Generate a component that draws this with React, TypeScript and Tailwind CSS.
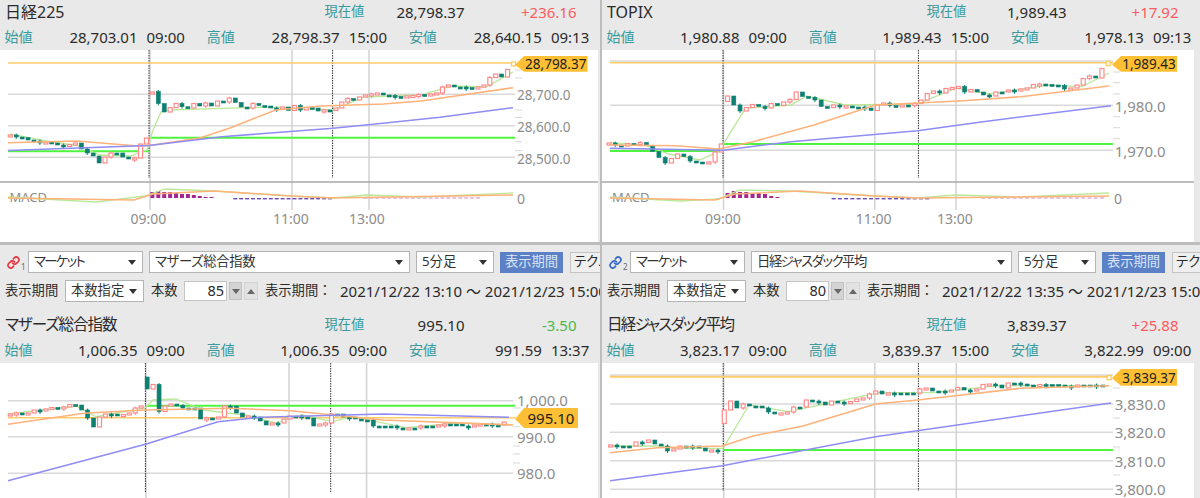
import { Link } from "lucide-react";

type Pt = [number, number];

type ChartData = {
  view: [number, number, number, number];
  x0: number;
  dx: number;
  closes: number[];
  opens: Record<number, number>;
  lastMark: boolean;
  gold: [number, number, number, number];
  grid: number[];
  gridEnd: number;
  ticks: number[];
  axisX: number;
  axisSize: number;
  axis: [string, number][];
  dotted: number[];
  dottedEnd: number;
  gray: [number, number][];
  green: [number, number, number][];
  blue: Pt[];
  orange: Pt[];
  light: Pt[];
  tag: { x1: number; x2: number; y1: number; y2: number; text: string; size: number };
  macd?: {
    green: Pt[];
    orange: Pt[];
    pos: [number, number[]];
    neg: [number, number];
    times: [string, number][];
    zeroX: number;
    labelX: number;
  };
};

const nikkei: ChartData = {
  view: [0, 50, 598, 192],
  x0: 10.3,
  dx: 5.92,
  closes: [
    135, 137, 137.5, 140, 141, 142.5, 142, 143, 145, 145, 144.5, 143, 149, 153, 156, 163, 157, 153, 153, 157, 159, 158,
    144, 138, 92, 103.5, 112, 107.6, 103.5, 106.7, 108, 103.5, 106, 103, 106, 101, 102, 98, 102.5, 107, 108, 103.5,
    105.5, 106, 108, 108.5, 107, 110.5, 105.5, 110, 107.5, 108, 111, 110, 110.5, 108, 102, 98.5, 100, 97, 95, 94, 93,
    95, 95.5, 96.5, 98, 96, 95.5, 94.5, 95, 94, 93, 87, 85, 87, 87, 87.5, 89, 87, 85, 77.5, 74, 77, 69.5,
  ],
  opens: { 24: 94, 25: 91.5 },
  lastMark: true,
  gold: [8, 515, 63, 1.5],
  grid: [94.3, 125.7, 157.3],
  gridEnd: 515,
  ticks: [70, 78, 110, 117.5, 141.7, 150.7],
  axisX: 517,
  axisSize: 13.5,
  axis: [
    ["28,700.0", 95],
    ["28,600.0", 126.5],
    ["28,500.0", 158.5],
  ],
  dotted: [149, 332.6],
  dottedEnd: 178,
  gray: [
    [150, 210],
    [292, 210],
    [369, 210],
  ],
  green: [
    [8, 149, 151.3],
    [150, 515, 137.7],
  ],
  blue: [[8, 150.6], [149, 145.6], [222, 136.7], [333, 128.3], [383, 123.3], [440, 117.3], [513, 107.7]],
  orange: [[8, 142.7], [76.5, 141], [138, 146], [153, 145], [200, 138], [230, 128], [275.5, 110], [321, 106], [383, 104], [421, 101], [513, 87.7]],
  light: [[10, 134], [46, 141], [80, 146], [99.5, 155], [130, 156], [147, 150], [153, 130], [161, 112], [168, 110], [268, 107], [333, 110], [364, 97], [421, 95], [452, 86], [486, 87], [513, 72]],
  tag: { x1: 515, x2: 587.5, y1: 56, y2: 71.7, text: "28,798.37", size: 13.5 },
  macd: {
    green: [[8, 197], [96, 202], [145, 196], [165, 189], [214, 191], [291, 196], [333, 198], [367, 195], [421, 197], [513, 193]],
    orange: [[8, 198], [134, 200], [153, 194], [214, 191], [291, 196], [333, 198], [513, 195]],
    pos: [24, [6, 7, 6, 6, 5, 4, 4, 3, 2, 1, 1]],
    neg: [38, 55],
    times: [["09:00", 148.5], ["11:00", 291], ["13:00", 367]],
    zeroX: 517,
    labelX: 9.5,
  },
};

const topix: ChartData = {
  view: [602, 50, 592, 192],
  x0: 609,
  dx: 6.24,
  closes: [
    143, 145, 146, 143.5, 143.5, 142.5, 145.5, 151.5, 157.5, 163, 158.5, 154, 156.5, 161, 162, 162.5, 162, 152, 144,
    96, 105, 111, 107.5, 104.5, 106.5, 108, 103.5, 105.5, 102, 99.5, 92, 96.5, 97.5, 100, 106.5, 107.5, 105, 106.5, 106,
    107, 107, 108, 110.5, 105, 103, 105.5, 105.5, 105, 105, 103.5, 100, 93.5, 91, 93, 88.5, 87.5, 86.5, 92, 89.5, 92,
    95, 96, 92, 92, 90, 90, 89, 88, 84.5, 84, 84.5, 85, 85.5, 89, 88, 85, 78.5, 76, 78, 68.5,
  ],
  opens: { 19: 101.5 },
  lastMark: true,
  gold: [610, 1113, 62.7, 1.5],
  grid: [61, 105.3, 150.3],
  gridEnd: 1113,
  ticks: [72, 82.7, 94, 116.7, 127.7, 138.7],
  axisX: 1114.7,
  axisSize: 15,
  axis: [
    ["1,980.0", 107],
    ["1,970.0", 152],
  ],
  dotted: [723, 918.4],
  dottedEnd: 178,
  gray: [
    [723.5, 210],
    [874.8, 210],
    [956, 210],
  ],
  green: [
    [610, 723, 151],
    [723, 1113, 144],
  ],
  blue: [[610, 148.3], [723, 150.3], [791, 141.7], [917.6, 130.7], [983, 121.7], [1111, 105.7]],
  orange: [[610, 145], [676.5, 145.7], [718.6, 149], [753, 141.7], [814, 125], [875.5, 105], [963.6, 100.7], [1021, 96.7], [1109, 86]],
  light: [[610, 142.3], [646, 145.7], [669, 154], [699.5, 160], [718.6, 151.7], [745.4, 108.3], [791, 105], [806.7, 96], [845, 105], [917.6, 104], [956, 88], [990, 94], [1047.8, 85], [1082, 86.7], [1109, 73]],
  tag: { x1: 1112, x2: 1177, y1: 56, y2: 71.7, text: "1,989.43", size: 13.5 },
  macd: {
    green: [[610, 197], [680, 201], [718, 199], [740, 190], [790, 191], [875, 196], [918, 198], [956, 195], [1021, 197], [1109, 193]],
    orange: [[610, 198], [715, 200], [735, 194], [800, 191], [875, 196], [918, 198], [1109, 196]],
    pos: [19, [5, 7, 6, 6, 5, 5, 4, 2, 1]],
    neg: [36, 52],
    times: [["09:00", 723], ["11:00", 873.6], ["13:00", 955]],
    zeroX: 1114,
    labelX: 612,
  },
};

const mothers: ChartData = {
  view: [0, 363, 598, 135],
  x0: 10.3,
  dx: 5.95,
  closes: [
    414, 413, 413.5, 413, 410, 410.5, 409, 407.5, 407.5, 407, 404.5, 405, 410, 418, 427, 417, 414, 414, 415, 414.5, 413,
    408, 406, 389, 384.5, 411.5, 406, 404, 405.5, 408, 408, 408, 419, 418, 418, 417, 406, 406, 413, 417, 416, 417, 421,
    425, 423, 423, 419, 416, 416, 417, 418, 426, 424, 423, 414, 414, 417, 417, 419, 420, 420, 426, 426, 426, 426, 428,
    429, 428, 428, 426, 426, 426, 425, 424, 424, 424, 426, 426, 425, 424, 424, 425, 425, 422,
  ],
  opens: { 23: 377 },
  lastMark: false,
  gold: [8, 515, 417.7, 1.5],
  grid: [400.7, 436.7, 473.3],
  gridEnd: 513,
  ticks: [408, 426.7, 446, 454, 463],
  axisX: 517,
  axisSize: 15,
  axis: [
    ["1,000.0", 401],
    ["990.0", 437.5],
    ["980.0", 474],
  ],
  dotted: [145.4, 330.7],
  dottedEnd: 492,
  gray: [
    [146, 498],
    [289, 498],
    [366.6, 498],
  ],
  green: [[147, 515, 405.7]],
  blue: [[8, 480.7], [145.4, 444.3], [218, 421.7], [260, 417.3], [383, 414], [509, 417.3]],
  orange: [[8, 424.3], [84, 413.3], [145, 410], [230, 408.3], [291, 410.7], [333, 415], [383, 420], [513, 425]],
  light: [[8, 414], [76.5, 406], [96, 416.7], [145, 408], [153, 400], [176, 399], [203, 410], [245, 415], [275.5, 423], [302, 415], [333, 421.7], [352, 416.7], [405.7, 427.7], [459, 423], [513, 425]],
  tag: { x1: 515, x2: 578, y1: 408, y2: 428, text: "995.10", size: 15 },
};

const jasdaq: ChartData = {
  view: [602, 363, 592, 135],
  x0: 610.7,
  dx: 6.31,
  closes: [
    445, 446, 446, 446, 442, 442.5, 440, 444, 446, 451, 449, 446, 446, 446, 448, 451, 450, 451, 410, 401, 408, 404, 406,
    406, 408, 412, 413.5, 413, 412, 407, 407, 400, 401, 402, 405, 401, 402, 402, 401.5, 399, 398, 394, 391, 394, 393,
    393, 393, 393, 393, 389, 388, 391, 391, 392, 390, 387.5, 390, 391, 389, 384.5, 384, 385, 388, 383, 383, 384, 385,
    385, 384.5, 384.5, 384.5, 385, 386, 386, 385, 385, 385, 385, 385,
  ],
  opens: { 18: 423.5 },
  lastMark: true,
  gold: [610, 1111, 376.7, 2],
  grid: [375, 404, 432.3, 460.7, 489.3],
  gridEnd: 1113,
  ticks: [388, 418, 447, 475],
  axisX: 1114.7,
  axisSize: 15,
  axis: [
    ["3,830.0", 405],
    ["3,820.0", 433],
    ["3,810.0", 462],
    ["3,800.0", 490],
  ],
  dotted: [723.2, 918.4],
  dottedEnd: 491,
  gray: [
    [723.7, 498],
    [874.8, 498],
    [956.3, 498],
  ],
  green: [[723, 1113, 450]],
  blue: [[610, 480.7], [722.5, 465.7], [875.5, 436.7], [1111, 403]],
  orange: [[610, 452.7], [657.4, 447.7], [722.5, 446], [753, 436], [803, 426], [875.5, 404], [917.6, 400], [1021, 388.3], [1109, 385.7]],
  light: [[610, 446], [661, 446], [676.5, 448.3], [723, 448.3], [749, 405], [787.5, 411.7], [829.6, 403], [879.4, 392.7], [933, 392.7], [998, 385.7], [1109, 385.7]],
  tag: { x1: 1112, x2: 1177, y1: 369, y2: 385.7, text: "3,839.37", size: 13.5 },
};

const pts = (p: Pt[]) => p.map((q) => q.join(",")).join(" ");

function Chart({ data }: { data: ChartData }) {
  const [vx, vy, vw, vh] = data.view;
  const m = data.macd;
  const xOf = (i: number) => data.x0 + i * data.dx;
  const lastX = xOf(data.closes.length);
  const lastY = data.tag.y1 + (data.tag.y2 - data.tag.y1) / 2 + 1;

  return (
    <div className="bg-white" style={{ width: vw, height: vh }}>
      <svg width={vw} height={vh} viewBox={`${vx} ${vy} ${vw} ${vh}`} className="block font-['Noto_Sans',sans-serif]">
        {data.grid.map((y) => (
          <line key={y} x1={vx + 8} x2={data.gridEnd} y1={y} y2={y} stroke="#d9d9d9" strokeWidth="1.5" />
        ))}
        {data.ticks.map((y) => (
          <line key={y} x1={data.gridEnd} x2={data.gridEnd + 7} y1={y} y2={y} stroke="#d9d9d9" />
        ))}
        {data.gray.map(([x, y2]) => (
          <line key={x} x1={x} x2={x} y1={vy} y2={y2} stroke="#d2d2d2" strokeWidth="1.5" />
        ))}
        {data.dotted.map((x) => (
          <line key={x} x1={x} x2={x} y1={vy} y2={data.dottedEnd} stroke="#333" strokeDasharray="1.5 1" />
        ))}
        {m && <line x1={vx} x2={vx + vw} y1={182} y2={182} stroke="#a8a8a8" strokeWidth="1.5" />}

        {data.axis.map(([label, y]) => (
          <text key={label} x={data.axisX} y={y + 5} fontSize={data.axisSize} fill="#8c8c8c">
            {label}
          </text>
        ))}

        <line x1={data.gold[0]} x2={data.gold[1]} y1={data.gold[2]} y2={data.gold[2]} stroke="#ffcb6b" strokeWidth={data.gold[3]} />
        {data.green.map(([x1, x2, y]) => (
          <line key={y} x1={x1} x2={x2} y1={y} y2={y} stroke="#4ff53c" strokeWidth="2" />
        ))}
        <polyline points={pts(data.light)} fill="none" stroke="#bce89a" strokeWidth="1.3" />

        {data.closes.map((c, i) => {
          const open = data.opens[i] ?? (i > 0 ? data.closes[i - 1] : c + 2);
          const up = c < open;
          const top = Math.min(open, c);
          const h = Math.max(Math.abs(open - c), 2);
          const x = xOf(i);
          const color = up ? "#ff8a8a" : "#0e8072";
          return (
            <g key={i}>
              {i % 4 === 1 && <line x1={x} x2={x} y1={top - 1.5} y2={top + h + 2} stroke={color} />}
              <rect
                x={x - 2}
                y={top}
                width={4}
                height={h}
                fill={up ? "#fff" : "#0e8072"}
                stroke={color}
                strokeWidth={up ? 1.2 : 0.6}
              />
            </g>
          );
        })}
        {data.lastMark && (
          <rect x={lastX - 2} y={data.gold[2] - 1} width={4} height={4} fill="#fff" stroke="#ffc94d" strokeWidth="1.2" />
        )}

        <polyline points={pts(data.orange)} fill="none" stroke="#ffb27a" strokeWidth="1.6" />
        <polyline points={pts(data.blue)} fill="none" stroke="#8f8cf5" strokeWidth="1.5" />

        <polygon
          points={`${data.tag.x1},${lastY} ${data.tag.x1 + 9},${data.tag.y1} ${data.tag.x2},${data.tag.y1} ${data.tag.x2},${data.tag.y2} ${data.tag.x1 + 9},${data.tag.y2}`}
          fill="#fdbf33"
        />
        <text
          x={(data.tag.x1 + 9 + data.tag.x2) / 2}
          y={lastY + 4.5}
          fontSize={data.tag.size}
          textAnchor="middle"
          fill="#222"
        >
          {data.tag.text}
        </text>

        {m && (
          <g>
            <text x={m.labelX} y={202} fontSize="13" fill="#8c8c8c">
              MACD
            </text>
            {m.pos[1].map((h, i) => (
              <rect key={i} x={xOf(m.pos[0] + i) - 2} y={198 - h} width={4} height={h} fill="#a2278f" />
            ))}
            {Array.from({ length: m.neg[1] - m.neg[0] }, (_, i) => (
              <rect key={i} x={xOf(m.neg[0] + i) - 2} y={198} width={4} height={1.4} fill="#6a4ab8" />
            ))}
            {Array.from({ length: 20 }, (_, i) => (
              <rect key={i} x={xOf(60 + i) - 2} y={197.5} width={4} height={1} fill="#d38ac6" />
            ))}
            <polyline points={pts(m.green)} fill="none" stroke="#bce89a" strokeWidth="1.3" />
            <polyline points={pts(m.orange)} fill="none" stroke="#ffb27a" strokeWidth="1.5" />
            <text x={m.zeroX} y={204} fontSize="14" fill="#8c8c8c">
              0
            </text>
            {m.times.map(([t, x]) => (
              <text key={t} x={x} y={224} fontSize="14" textAnchor="middle" fill="#8c8c8c">
                {t}
              </text>
            ))}
          </g>
        )}
      </svg>
    </div>
  );
}

type Quote = {
  name: string;
  nameClass: string;
  now: string;
  change: string;
  changeColor: string;
  open: [string, string];
  high: [string, string];
  low: [string, string];
};

function Stat({ label, value }: { label: string; value: [string, string] }) {
  return (
    <div className="flex w-[202.2px] shrink-0 items-center">
      <span className="w-[28px] shrink-0 text-[14px] text-[#3b9a9c]">{label}</span>
      <span className="w-[105px] shrink-0 text-right">{value[0]}</span>
      <span className="ml-[9px]">{value[1]}</span>
    </div>
  );
}

function Header({ quote }: { quote: Quote }) {
  return (
    <div className="text-[15px] leading-none text-[#2b2b2b]">
      <div className="flex h-[24px] items-center pl-[5px]">
        <span className={`w-[319.5px] shrink-0 [font-feature-settings:'palt'] ${quote.nameClass}`}>{quote.name}</span>
        <span className="w-[40px] shrink-0 text-[13.3px] text-[#3b9a9c]">現在値</span>
        <span className="w-[100px] shrink-0 text-right">{quote.now}</span>
        <span className="w-[112px] shrink-0 text-right" style={{ color: quote.changeColor }}>
          {quote.change}
        </span>
      </div>
      <div className="flex h-[26px] items-center pl-[4.5px] whitespace-nowrap">
        <Stat label="始値" value={quote.open} />
        <Stat label="高値" value={quote.high} />
        <Stat label="安値" value={quote.low} />
      </div>
    </div>
  );
}

function Caret({ up }: { up?: boolean }) {
  return (
    <svg width="8" height="5" viewBox="0 0 8 5" className="shrink-0">
      <polygon points={up ? "4,0 8,5 0,5" : "0,0 8,0 4,5"} fill="currentColor" />
    </svg>
  );
}

function Select({ text, width, textClass = "" }: { text: string; width: string; textClass?: string }) {
  return (
    <div className={`flex h-[22px] shrink-0 items-center justify-between border border-[#b4b4b4] bg-white pr-[6px] pl-[5px] text-[13.3px] text-[#333] ${width}`}>
      <span className={`[font-feature-settings:'palt'] ${textClass}`}>{text}</span>
      <Caret />
    </div>
  );
}

type Bar = { color: string; num: string; market: string; marketClass: string; count: string; range: string };

function Toolbar({ color, num, market, marketClass, count, range }: Bar) {
  return (
    <div className="px-[7px] pt-[6px] pb-[11px] text-[13.3px] whitespace-nowrap text-[#2b2b2b]">
      <div className="flex h-[22px] items-center">
        <Link size={13} strokeWidth={3} color={color} className="shrink-0" />
        <span className="mt-[10px] ml-[1px] w-[7px] shrink-0 text-[8px] text-[#666]">{num}</span>
        <Select text="マーケット" width="w-[115px]" textClass="tracking-[-1.6px]" />
        <div className="ml-[6px] shrink-0">
          <Select text={market} width="w-[261px]" textClass={marketClass} />
        </div>
        <div className="ml-[6px] shrink-0">
          <Select text="5分足" width="w-[78px]" />
        </div>
        <div className="ml-[6px] flex h-[21px] w-[63px] shrink-0 items-center justify-center bg-[#5b80c6] text-[#dbe7f7]">表示期間</div>
        <div className="ml-[7px] flex h-[21px] w-[60px] shrink-0 items-center border border-[#c4c4c4] bg-[#efefef] pl-[3px] [font-feature-settings:'palt']">テクニカル</div>
      </div>
      <div className="mt-[7px] -ml-[2px] flex h-[22px] items-center">
        <span className="w-[60px] shrink-0">表示期間</span>
        <Select text="本数指定" width="w-[79px]" />
        <span className="ml-[7px] w-[33px] shrink-0">本数</span>
        <div className="flex h-[20px] w-[43px] shrink-0 items-center justify-end border border-[#c4c4c4] bg-white pr-[2px] text-[14.5px]">{count}</div>
        <div className="ml-[2px] flex h-[18px] w-[13px] shrink-0 items-center justify-center border border-[#c0c0c0] bg-[#d4d4d4] text-[#666]">
          <Caret />
        </div>
        <div className="ml-[2px] flex h-[18px] w-[14px] shrink-0 items-center justify-center border border-[#d4d4d4] bg-[#e2e2e2] text-[#666]">
          <Caret up />
        </div>
        <span className="ml-[7px] w-[75px] shrink-0">表示期間：</span>
        <span className="shrink-0 text-[15px]">{range}</span>
      </div>
    </div>
  );
}

function Column({ top, bottom, topQuote, bottomQuote, bar, className }: { top: ChartData; bottom: ChartData; topQuote: Quote; bottomQuote: Quote; bar: Bar; className: string }) {
  return (
    <div className={`h-full overflow-hidden ${className}`}>
      <Header quote={topQuote} />
      <Chart data={top} />
      <div className="h-[3px] bg-[#bdbdbd]" />
      <Toolbar {...bar} />
      <Header quote={bottomQuote} />
      <Chart data={bottom} />
    </div>
  );
}

export default function App() {
  return (
    <div className="flex h-[498px] w-[1200px] overflow-hidden bg-[#e9e9e9] font-['Noto_Sans','Noto_Sans_CJK_JP',sans-serif]">
      <Column
        className="w-[600px]"
        top={nikkei}
        bottom={mothers}
        topQuote={{ name: "日経225", nameClass: "text-[16px]", now: "28,798.37", change: "+236.16", changeColor: "#ff5a5f", open: ["28,703.01", "09:00"], high: ["28,798.37", "15:00"], low: ["28,640.15", "09:13"] }}
        bottomQuote={{ name: "マザーズ総合指数", nameClass: "text-[15.5px] tracking-[-1px]", now: "995.10", change: "-3.50", changeColor: "#4cb848", open: ["1,006.35", "09:00"], high: ["1,006.35", "09:00"], low: ["991.59", "13:37"] }}
        bar={{ color: "#e5343c", num: "1", market: "マザーズ総合指数", marketClass: "tracking-[-0.3px]", count: "85", range: "2021/12/22 13:10 ～ 2021/12/23 15:00" }}
      />
      <Column
        className="w-[600px] border-l-2 border-[#bdbdbd]"
        top={topix}
        bottom={jasdaq}
        topQuote={{ name: "TOPIX", nameClass: "text-[16px]", now: "1,989.43", change: "+17.92", changeColor: "#ff5a5f", open: ["1,980.88", "09:00"], high: ["1,989.43", "15:00"], low: ["1,978.13", "09:13"] }}
        bottomQuote={{ name: "日経ジャスダック平均", nameClass: "text-[15.5px] tracking-[-1.7px]", now: "3,839.37", change: "+25.88", changeColor: "#ff5a5f", open: ["3,823.17", "09:00"], high: ["3,839.37", "15:00"], low: ["3,822.99", "09:00"] }}
        bar={{ color: "#3466c8", num: "2", market: "日経ジャスダック平均", marketClass: "tracking-[-1.4px]", count: "80", range: "2021/12/22 13:35 ～ 2021/12/23 15:00" }}
      />
    </div>
  );
}
